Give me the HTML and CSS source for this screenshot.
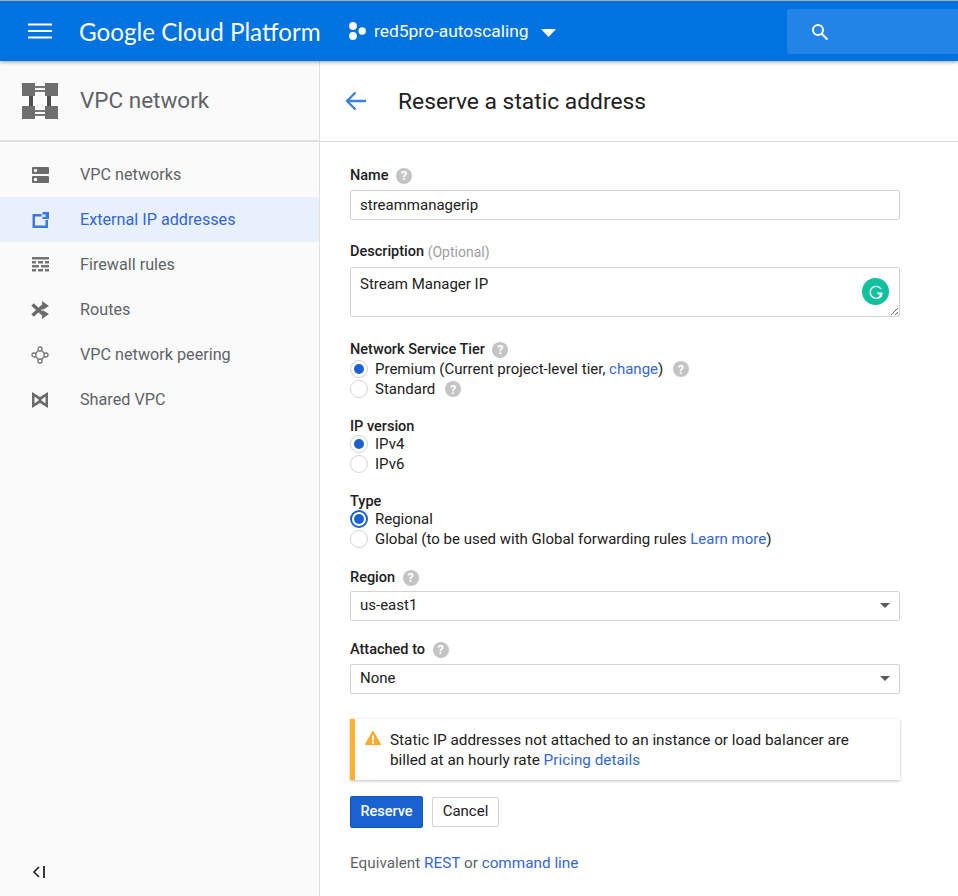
FILE: index.html
```html
<!DOCTYPE html>
<html lang="en">
<head>
<meta charset="utf-8">
<title>Reserve a static address</title>
<link rel="stylesheet" href="styles.css">
</head>
<body>
<header class="topbar">
  <svg class="menu-icon" viewBox="0 0 24 18" width="24" height="18"><path d="M0 1.500h24v2H0zM0 8h24v2H0zM0 14.500h24v2H0z" fill="#fff"/></svg>
  <div class="brand">Google Cloud Platform</div>
  <div class="project">
    <svg class="project-icon" viewBox="0 0 18 18" width="18" height="18"><circle cx="5" cy="4" r="3.900" fill="#fff"/><circle cx="5" cy="14" r="3.900" fill="#fff"/><circle cx="14.200" cy="9" r="3.700" fill="#fff"/></svg>
    <span class="project-name">red5pro-autoscaling</span>
    <svg class="project-caret" viewBox="0 0 15 8" width="15" height="8"><path d="M0 0h15L7.500 8z" fill="#fff"/></svg>
  </div>
  <div class="search">
    <svg viewBox="0 0 18 18" width="18" height="18"><circle cx="7" cy="7" r="5" fill="none" stroke="#fff" stroke-width="2"/><path d="M10.500 10.500l6 6" stroke="#fff" stroke-width="2.200"/></svg>
  </div>
</header>
<div class="shell">
  <aside class="sidebar">
    <div class="side-head">
      <svg class="vpc-logo" viewBox="0 0 36 36" width="36" height="36">
        <path d="M7 11h4v14H7zM25 11h4v14h-4z" fill="#4f4f4f"/>
        <path d="M11 3h14v2H11zM11 7h14v2H11zM11 27h14v2H11zM11 31h14v2H11z" fill="#777"/>
        <path d="M0 0h13v13H0zM23 0h13v13H23zM0 23h13v13H0zM23 23h13v13H23z" fill="#6e6e6e"/>
      </svg>
      <div class="side-title">VPC network</div>
    </div>
    <nav class="nav">
      <a class="nav-item"><svg viewBox="0 0 18 18" width="18" height="18"><rect x="1" y="1" width="17" height="7" rx="1" fill="#6b6b6b"/><rect x="1" y="10" width="17" height="7" rx="1" fill="#6b6b6b"/><circle cx="4.500" cy="4.500" r="1.700" fill="#fafafa"/><circle cx="4.500" cy="13.500" r="1.700" fill="#fafafa"/></svg><span>VPC networks</span></a>
      <a class="nav-item active"><svg viewBox="0 0 18 18" width="18" height="18"><path d="M1.500 3h9v2.500H4v9h10.500V9H17v8H1.500z" fill="#3b78e7"/><path d="M11.500 1H18v7h-6.500z" fill="#3b78e7"/><path d="M11.500 3.500h3V6h-3z" fill="#e8f0fb"/></svg><span>External IP addresses</span></a>
      <a class="nav-item"><svg viewBox="0 0 18 18" width="18" height="18"><path d="M1 1h17v2.500H1zM1 5h4v2.500H1zM7 5h5v2.500H7zM14 5h4v2.500h-4zM1 9h7v2.500H1zM10 9h8v2.500h-8zM1 13h4v2.500H1zM7 13h5v2.500H7zM14 13h4v2.500h-4z" fill="#757575"/></svg><span>Firewall rules</span></a>
      <a class="nav-item"><svg viewBox="0 0 18 18" width="18" height="18"><path d="M1.500 3.500L12.500 13.500M1.500 14.500L12.500 4.500" fill="none" stroke="#6b6b6b" stroke-width="3.600"/><path d="M11 0l7 5-6.500 4zM11 18l7-5-6.500-4z" fill="#6b6b6b"/></svg><span>Routes</span></a>
      <a class="nav-item"><svg viewBox="0 0 18 18" width="18" height="18"><g fill="none" stroke="#757575" stroke-width="1.300"><circle cx="9" cy="3" r="2"/><circle cx="9" cy="15" r="2"/><circle cx="3" cy="9" r="2"/><circle cx="15" cy="9" r="2"/><path d="M7.500 4.500l-3 3M10.500 4.500l3 3M7.500 13.500l-3-3M10.500 13.500l3-3"/></g></svg><span>VPC network peering</span></a>
      <a class="nav-item"><svg viewBox="0 0 18 18" width="18" height="18"><path fill-rule="evenodd" d="M1 1l8 5 8-5v16l-8-5-8 5zM3.500 5.500v7L8 9zM14.500 5.500L10 9l4.500 3.500z" fill="#6b6b6b"/></svg><span>Shared VPC</span></a>
    </nav>
    <div class="collapse"><svg viewBox="0 0 14 12" width="14" height="12"><path d="M7 1L2 6l5 5" fill="none" stroke="#212121" stroke-width="1.600"/><path d="M12 0v12" stroke="#212121" stroke-width="1.800"/></svg></div>
  </aside>
  <main class="main">
    <div class="page-head">
      <svg class="back" viewBox="0 0 21 20" width="21" height="20"><path d="M10.500 1.500L2 10l8.500 8.500M2 10h19" fill="none" stroke="#3b80e0" stroke-width="2.300"/></svg>
      <h1 class="page-title">Reserve a static address</h1>
    </div>
    <form class="form">
      <div class="field">
        <div class="lbl lbl-5">Name <i class="help">?</i></div>
        <input class="text-input" type="text" value="streammanagerip">
      </div>
      <div class="field field-desc">
        <div class="lbl lbl-6">Description <span class="optional">(Optional)</span></div>
        <div class="textarea-wrap">
          <textarea class="text-area">Stream Manager IP</textarea>
          <span class="grammarly"><svg viewBox="0 0 18 18" width="18" height="18"><path d="M14.200 6.200A6 6 0 1 0 15 10.500H10.500" fill="none" stroke="#fff" stroke-width="1.400"/><path d="M9.500 9.500h5v4.500z" fill="#fff"/></svg></span>
        </div>
      </div>
      <div class="field field-tier">
        <div class="lbl">Network Service Tier <i class="help">?</i></div>
        <div class="radio-row"><i class="radio on"></i>Premium (Current project-level tier,&nbsp;<a class="link">change</a>) <i class="help help-row">?</i></div>
        <div class="radio-row"><i class="radio"></i>Standard <i class="help help-row">?</i></div>
      </div>
      <div class="field field-compact">
        <div class="lbl lbl-short">IP version</div>
        <div class="radio-row"><i class="radio on"></i>IPv4</div>
        <div class="radio-row"><i class="radio"></i>IPv6</div>
      </div>
      <div class="field field-compact">
        <div class="lbl lbl-short">Type</div>
        <div class="radio-row"><i class="radio on focus"></i>Regional</div>
        <div class="radio-row"><i class="radio"></i>Global (to be used with Global forwarding rules&nbsp;<a class="link">Learn more</a>)</div>
      </div>
      <div class="field field-select">
        <div class="lbl lbl-4">Region <i class="help">?</i></div>
        <div class="select">us-east1<i class="select-caret"></i></div>
      </div>
      <div class="field field-select">
        <div class="lbl lbl-5">Attached to <i class="help">?</i></div>
        <div class="select">None<i class="select-caret"></i></div>
      </div>
      <div class="notice">
        <svg class="notice-icon" viewBox="0 0 16 14" width="16" height="14"><path d="M8 0L16 14H0z" fill="#f9ab2d" stroke="#f9ab2d" stroke-linejoin="round"/><path d="M7 4.500h2v5H7zM7 10.500h2v2H7z" fill="#fff"/></svg>
        <div class="notice-text">Static IP addresses not attached to an instance or load balancer are billed at an hourly rate <a class="link">Pricing details</a></div>
      </div>
      <div class="actions">
        <button class="btn btn-primary" type="button">Reserve</button>
        <button class="btn btn-secondary" type="button">Cancel</button>
      </div>
      <div class="equiv">Equivalent <a class="link">REST</a> or <a class="link">command line</a></div>
    </form>
  </main>
</div>
</body>
</html>
```
FILE: styles.css
```css
* { box-sizing: border-box; }
html, body { margin: 0; height: 100%; overflow: hidden; }
body { width: 958px; height: 896px; background: #fff; font-family: Roboto, "Liberation Sans", sans-serif; font-size: 15px; color: #212121; display: flex; flex-direction: column; border-top: 1px solid #a8a8a8; }

.topbar { height: 60px; flex: none; background: #0073e0; display: flex; align-items: center; color: #fff; box-shadow: 0 1px 4px rgba(0,0,0,.4); position: relative; z-index: 2; }
.menu-icon { margin-left: 28px; }
.brand { margin-left: 27px; font-family: Lato, sans-serif; font-size: 24.200px; white-space: nowrap; width: 241px; }
.project { margin-left: 28px; display: flex; align-items: center; }
.project-name { margin-left: 8px; font-size: 17.400px; }
.project-caret { margin-left: 12px; margin-top: 3px; }
.search { position: absolute; left: 787px; right: 0; top: 8px; height: 45px; background: #2284e6; border-radius: 2px 0 0 2px; padding: 14px 0 0 24px; }

.shell { flex: 1; display: flex; min-height: 0; }
.sidebar { width: 320px; flex: none; background: #fafafa; border-right: 1px solid #e0e0e0; display: flex; flex-direction: column; }
.side-head { height: 81px; border-bottom: 2px solid #e0e0e0; display: flex; align-items: center; padding: 0 0 2px 22px; }
.vpc-logo { margin-top: 2px; }
.side-title { margin-left: 22px; font-size: 22.500px; color: #5f6368; }
.nav { padding-top: 10px; flex: 1; }
.nav-item { height: 45px; display: flex; align-items: center; padding-left: 31px; color: #5f6368; font-size: 16.200px; }
.nav-item span { margin-left: 31px; }
.nav-item.active { background: #e8f0fb; color: #3367d6; }
.collapse { height: 32px; padding-left: 32px; }

.main { flex: 1; min-width: 0; }
.page-head { height: 81px; border-bottom: 1px solid #dadada; display: flex; align-items: center; padding-left: 25px; }
.back { flex: none; }
.page-title { margin: 0 0 0 32px; font-size: 22.800px; font-weight: 400; color: #212121; }
.form { padding: 23px 58px 0 30px; }

.lbl { height: 20px; display: flex; align-items: center; font-size: 14.500px; font-weight: 500; white-space: pre; margin-bottom: 0; padding-top: 1px; }
.lbl-4 { margin-bottom: 4px; }
.lbl-5 { margin-bottom: 5px; }
.lbl-6 { margin-bottom: 6px; }
.lbl-short { height: 16px; }
.optional { color: #9e9e9e; font-weight: 400; font-size: 14px; }
.help { width: 16px; height: 16px; border-radius: 50%; background: #c4c4c4; color: #fff; font-style: normal; font-size: 12.500px; font-weight: 700; display: inline-flex; align-items: center; justify-content: center; margin-left: 4px; }
.help-row { margin-left: 6px; }
.text-input, .text-area, .select { width: 100%; border: 1px solid #d4d4d4; border-radius: 2px; font: inherit; color: #212121; background: #fff; padding: 0 9px; }
.text-input { height: 30px; display: block; }
.text-area { height: 50px; display: block; padding-top: 7px; }
.textarea-wrap { position: relative; }
.grammarly { position: absolute; right: 11px; top: 11px; width: 27px; height: 27px; border-radius: 50%; background: #11c19e; display: flex; align-items: center; justify-content: center; }

.field-desc { margin-top: 21px; }
.field-tier { margin-top: 22px; }
.field-compact { margin-top: 19px; }
.field-select { margin-top: 18px; }

.radio-row { height: 20px; display: flex; align-items: center; white-space: pre; }
.radio { width: 18px; height: 18px; flex: none; border-radius: 50%; border: 1px solid #d4d4d4; background: #fff; margin-right: 7px; display: flex; align-items: center; justify-content: center; }
.radio.on::after { content: ""; width: 10px; height: 10px; border-radius: 50%; background: #1a62d0; }
.radio.focus { border: 2px solid #1a62d0; }
.link { color: #3367d6; }

.select { height: 30px; display: flex; align-items: center; position: relative; padding-bottom: 2px; }
.select-caret { position: absolute; right: 9px; top: 11px; border-left: 5.500px solid transparent; border-right: 5.500px solid transparent; border-top: 5px solid #5a5a5a; }

.notice { margin-top: 25px; height: 61px; border-left: 5px solid #fbb32f; box-shadow: 0 1px 3px rgba(0,0,0,.25); display: flex; padding: 11px 40px 0 10px; line-height: 20px; font-size: 15.300px; }
.notice-icon { flex: none; margin-top: 1px; }
.notice-text { margin-left: 9px; }

.actions { margin-top: 16px; display: flex; align-items: center; }
.btn { font: inherit; border-radius: 2px; padding: 0 0 2px; }
.btn-primary { width: 73px; height: 32px; background: #1a62d0; color: #fff; font-size: 14.500px; font-weight: 500; border: 1px solid #1557bd; }
.btn-secondary { width: 67px; height: 30px; margin-left: 9px; background: #fff; color: #212121; border: 1px solid #d4d4d4; }
.equiv { margin-top: 25px; color: #5f6368; line-height: 20px; font-size: 15.300px; }
```
